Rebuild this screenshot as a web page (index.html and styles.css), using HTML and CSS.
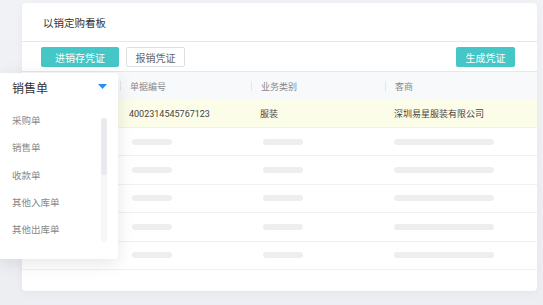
FILE: index.html
```html
<!DOCTYPE html>
<html lang="zh">
<head>
  <meta charset="UTF-8">
  <meta name="viewport" content="width=device-width, initial-scale=1.0">
  <title>以销定购看板</title>
  <link rel="stylesheet" href="styles.css">
</head>
<body>
  <div class="card">
    <div class="card-title">以销定购看板</div>
    <div class="toolbar">
      <button class="btn btn-primary">进销存凭证</button>
      <button class="btn btn-outline">报销凭证</button>
      <button class="btn btn-primary btn-right">生成凭证</button>
    </div>
    <div class="table">
      <div class="row head">
        <div class="cell"></div>
        <div class="cell sep">单据编号</div>
        <div class="cell sep">业务类别</div>
        <div class="cell sep">客商</div>
      </div>
      <div class="row active">
        <div class="cell"></div>
        <div class="cell">4002314545767123</div>
        <div class="cell">服装</div>
        <div class="cell">深圳易星服装有限公司</div>
      </div>
      <div class="row skel">
        <div class="cell first"><span class="bar tiny"></span><span class="bar tiny"></span></div>
        <div class="cell"><span class="bar"></span></div>
        <div class="cell"><span class="bar"></span></div>
        <div class="cell"><span class="bar long"></span></div>
      </div>
      <div class="row skel">
        <div class="cell first"><span class="bar tiny"></span><span class="bar tiny"></span></div>
        <div class="cell"><span class="bar"></span></div>
        <div class="cell"><span class="bar"></span></div>
        <div class="cell"><span class="bar long"></span></div>
      </div>
      <div class="row skel">
        <div class="cell first"><span class="bar tiny"></span><span class="bar tiny"></span></div>
        <div class="cell"><span class="bar"></span></div>
        <div class="cell"><span class="bar"></span></div>
        <div class="cell"><span class="bar long"></span></div>
      </div>
      <div class="row skel">
        <div class="cell first"><span class="bar tiny"></span><span class="bar tiny"></span></div>
        <div class="cell"><span class="bar"></span></div>
        <div class="cell"><span class="bar"></span></div>
        <div class="cell"><span class="bar long"></span></div>
      </div>
      <div class="row skel">
        <div class="cell first"><span class="bar tiny"></span><span class="bar tiny"></span></div>
        <div class="cell"><span class="bar"></span></div>
        <div class="cell"><span class="bar"></span></div>
        <div class="cell"><span class="bar long"></span></div>
      </div>
    </div>
  </div>

  <div class="dropdown">
    <div class="dropdown-head">
      <span>销售单</span>
      <svg class="caret" width="9" height="5" viewBox="0 0 9 5"><path d="M0 0h9L4.5 5z" fill="#2d8cf0"/></svg>
    </div>
    <div class="dropdown-body">
      <ul class="options">
        <li>采购单</li>
        <li>销售单</li>
        <li>收款单</li>
        <li>其他入库单</li>
        <li>其他出库单</li>
      </ul>
      <div class="scroll-track"><div class="scroll-thumb"></div></div>
    </div>
  </div>
</body>
</html>
```

FILE: styles.css
```css
body {
  font-family: Roboto, 'Noto Sans CJK SC', sans-serif;
  margin: 0;
  padding: 3px 6px 0 22px;
  background: linear-gradient(to bottom, #f0f2f5, #eceef2);
  height: 305px;
  box-sizing: border-box;
  position: relative;
  overflow: hidden;
  color: #333;
}
.card {
  width: 515px;
  height: 288px;
  background: white;
  border-radius: 4px;
  box-shadow: 0 2px 10px rgba(0, 0, 0, 0.04);
  overflow: hidden;
}
.card-title {
  height: 38px;
  display: flex;
  align-items: center;
  padding-left: 21px;
  font-size: 10.5px;
  color: #333;
  border-bottom: 1px solid #e8e8e8;
}
.toolbar {
  height: 30px;
  box-sizing: border-box;
  display: flex;
  align-items: flex-start;
  gap: 7px;
  padding: 5px 22px 0 19px;
  border-bottom: 1px solid #e6e8eb;
}
.btn {
  height: 20px;
  padding: 0;
  font-family: inherit;
  font-size: 10px;
  border-radius: 2px;
  cursor: pointer;
}
.btn-primary {
  width: 78px;
  background: #44c7c6;
  border: none;
  color: white;
}
.btn-outline {
  width: 59px;
  background: white;
  border: 1px solid #dcdee2;
  color: #666;
}
.btn-right {
  width: 59px;
  margin-left: auto;
}
.row {
  display: grid;
  grid-template-columns: 98px 131px 134px 1fr;
  height: 28.4px;
  box-sizing: border-box;
  border-bottom: 1px solid #f0f1f3;
  align-items: center;
  font-size: 9px;
}
.row.head {
  height: 28px;
  background: #f8f9fb;
  color: #888;
  border-bottom: none;
}
.row.active {
  height: 28px;
  background: #fcfde9;
  color: #444;
}
.cell {
  padding-left: 9px;
  white-space: nowrap;
  display: flex;
  align-items: center;
}
.cell.sep {
  border-left: 1px solid #e4e6ea;
  height: 10px;
}
.bar {
  display: block;
  width: 40px;
  height: 6px;
  margin-left: 3px;
  border-radius: 3px;
  background: #eeeeef;
}
.bar.long {
  width: 100px;
  margin-left: 0;
}
.cell.first {
  padding-left: 28px;
  gap: 33px;
}
.bar.tiny {
  width: 12px;
  margin-left: 0;
}
.dropdown {
  position: absolute;
  left: 0;
  top: 73px;
  width: 118px;
  height: 186px;
  background: white;
  border-radius: 0 4px 4px 0;
  box-shadow: 0 4px 18px rgba(0, 0, 0, 0.1);
}
.dropdown-head {
  height: 29px;
  display: flex;
  align-items: center;
  justify-content: space-between;
  padding: 0 11px 0 12px;
  font-size: 12px;
  color: #333;
}
.caret {
  margin-top: -3px;
}
.dropdown-body {
  display: flex;
  justify-content: space-between;
  padding: 10px 11px 0 12px;
}
.options {
  list-style: none;
  margin: 0;
  padding: 0;
  font-size: 9.5px;
  color: #888;
}
.options li {
  height: 27.3px;
  line-height: 17px;
}
.scroll-track {
  width: 6px;
  height: 124px;
  margin-top: 6px;
  border-radius: 3px;
  background: #f5f6f8;
}
.scroll-thumb {
  height: 57px;
  border-radius: 3px;
  background: #e9eaed;
}
```
